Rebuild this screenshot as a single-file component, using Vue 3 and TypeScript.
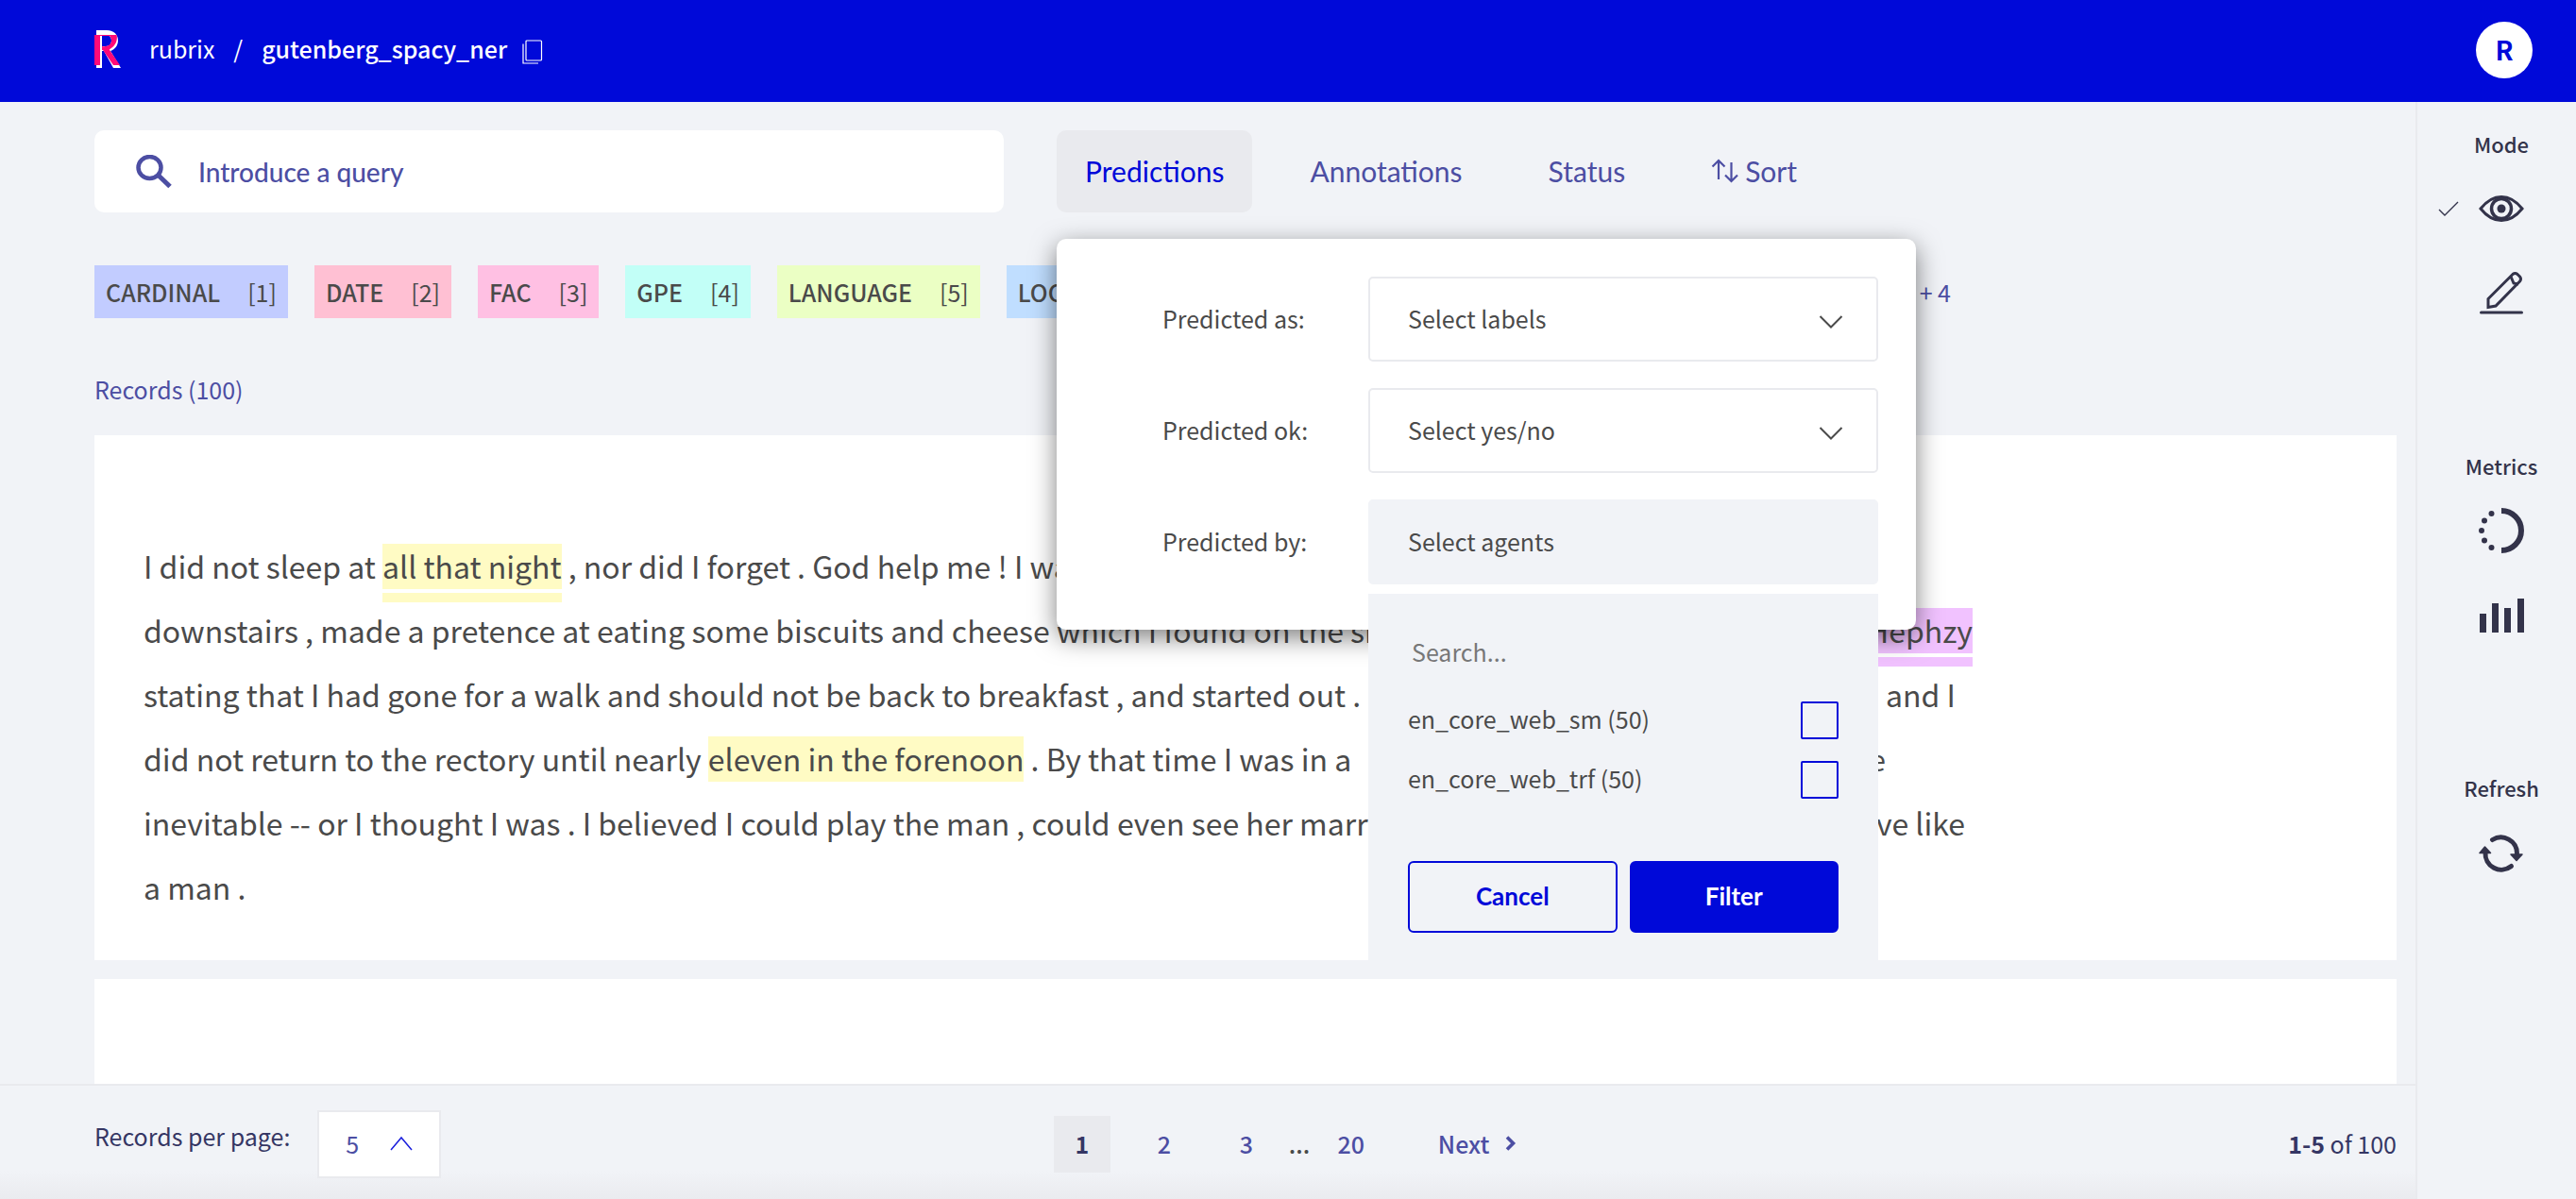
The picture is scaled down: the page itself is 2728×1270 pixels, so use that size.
<script setup lang="ts">
import { ref } from 'vue'

interface EntityLabel { name: string; key: string; color: string }
interface Token { text: string; entity?: string; predicted?: boolean }
interface Line { start: Token[]; end?: Token; inset?: number }

const labels: EntityLabel[] = [
  { name: 'CARDINAL', key: '1', color: '#c2ccff' },
  { name: 'DATE', key: '2', color: '#ffc0d3' },
  { name: 'FAC', key: '3', color: '#ffc0e3' },
  { name: 'GPE', key: '4', color: '#c2fff7' },
  { name: 'LANGUAGE', key: '5', color: '#ebffc4' },
  { name: 'LOC', key: '6', color: '#c0deff' },
]

const lines: Line[] = [
  {
    start: [
      { text: 'I did not sleep at ' },
      { text: 'all that night', entity: 'date', predicted: true },
      { text: ' , nor did I forget . God help me ! I was' },
    ],
  },
  {
    start: [{ text: 'downstairs , made a pretence at eating some biscuits and cheese which I found on the side' }],
    end: { text: 'Hephzy', entity: 'person', predicted: true },
  },
  {
    start: [{ text: 'stating that I had gone for a walk and should not be back to breakfast , and started out .' }],
    end: { text: 'and I' },
    inset: 18,
  },
  {
    start: [
      { text: 'did not return to the rectory until nearly ' },
      { text: 'eleven in the forenoon', entity: 'date' },
      { text: ' . By that time I was in a' },
    ],
    end: { text: 'the' },
    inset: 92,
  },
  {
    start: [{ text: 'inevitable -- or I thought I was . I believed I could play the man , could even see her marry' }],
    end: { text: 'have like' },
    inset: 8,
  },
  { start: [{ text: 'a man .' }] },
]

const agents = ref([
  { id: 'en_core_web_sm', count: 50, checked: false },
  { id: 'en_core_web_trf', count: 50, checked: false },
])
const query = ref('')
const agentQuery = ref('')
const pages = ['1', '2', '3', '...', '20']
</script>

<template>
  <div class="app">
    <header class="topbar">
      <a href="#" class="logo" aria-label="Rubrix home">
        <svg width="30" height="42" viewBox="0 0 30 42">
          <path fill="#fff" fill-rule="evenodd" d="M2 0h11c8 0 12 5 12 11 0 5-3 9-8 11l11 18h-8L10 22H8v18H2zM8 5v12h4c4 0 6-3 6-6s-2-6-6-6z" />
          <path fill="#ff0a78" fill-rule="evenodd" d="M0 5h23.500c.5 1.500.5 3 .2 5-.8 5-4 8-8 10.500L27 37h-7L9 21H6v16H0zM8 6v11c6 1 10-2 10-6 0-2-1-4-2-5z" />
          <path fill="#fff" d="M6 6h2v34H2v-3h4z" />
        </svg>
      </a>
      <nav class="crumbs">
        <a href="#">rubrix</a><span class="slash">/</span><a href="#" class="current">gutenberg_spacy_ner</a>
      </nav>
      <button class="copy" aria-label="Copy name">
        <svg width="22" height="26" viewBox="0 0 22 26" fill="none" stroke="#fff">
          <rect x="4" y="1" width="16.500" height="21" rx="1" stroke-width="1.200" />
          <path d="M1 4.500v20.500h16" stroke-width="1.200" />
        </svg>
      </button>
      <button class="avatar">R</button>
    </header>

    <div class="body">
      <main class="main">
        <div class="content">
          <div class="filters">
            <label class="search">
              <svg width="38" height="36" viewBox="0 0 38 36" fill="none" stroke="#4c4ea3">
                <ellipse cx="14.500" cy="13.500" rx="12" ry="11.500" stroke-width="4.500" />
                <path d="M23.500 21.500L36 33.500" stroke-width="5" />
              </svg>
              <input v-model="query" type="text" placeholder="Introduce a query" aria-label="Query" />
            </label>
            <div class="tabs">
              <div class="tab-wrap">
                <button class="tab active">Predictions</button>
                <section class="panel">
                  <div class="field">
                    <label for="predicted-as">Predicted as:</label>
                    <div class="control">
                      <select id="predicted-as"><option>Select labels</option></select>
                      <svg class="chevron" width="26" height="14" viewBox="0 0 26 14" fill="none" stroke="#4a4a4a" stroke-width="2"><path d="M1.500 1L13 12.500 24.500 1" /></svg>
                    </div>
                  </div>
                  <div class="field">
                    <label for="predicted-ok">Predicted ok:</label>
                    <div class="control">
                      <select id="predicted-ok"><option>Select yes/no</option></select>
                      <svg class="chevron" width="26" height="14" viewBox="0 0 26 14" fill="none" stroke="#4a4a4a" stroke-width="2"><path d="M1.500 1L13 12.500 24.500 1" /></svg>
                    </div>
                  </div>
                  <div class="field">
                    <label for="predicted-by">Predicted by:</label>
                    <div class="control">
                      <button id="predicted-by" class="opened" aria-expanded="true">Select agents</button>
                      <div class="dropdown">
                        <input v-model="agentQuery" class="agent-search" type="text" placeholder="Search..." aria-label="Search agents" />
                        <label v-for="a in agents" :key="a.id" class="agent">
                          <span>{{ a.id }} ({{ a.count }})</span>
                          <input v-model="a.checked" type="checkbox" />
                        </label>
                        <div class="actions">
                          <button class="btn outline">Cancel</button>
                          <button class="btn solid">Filter</button>
                        </div>
                      </div>
                    </div>
                  </div>
                </section>
              </div>
              <button class="tab">Annotations</button>
              <button class="tab">Status</button>
              <button class="tab sort">
                <svg width="30" height="26" viewBox="0 0 30 26" fill="none" stroke="#4c4ea3" stroke-width="2.200">
                  <path d="M8 22V2M1.500 8.500L8 2l6.500 6.500M21.500 4v20M15 17.500l6.500 6.500 6.500-6.500" />
                </svg>
                Sort
              </button>
            </div>
          </div>

          <div class="labels">
            <button v-for="l in labels" :key="l.name" class="label" :style="{ background: l.color }">
              <b>{{ l.name }}</b><span>[{{ l.key }}]</span>
            </button>
            <button class="more">+ 4</button>
          </div>

          <p class="count">Records (100)</p>

          <article class="record">
            <p v-for="(line, i) in lines" :key="i" class="line" :style="{ paddingRight: (line.inset ?? 0) + 'px' }">
              <span><span
                v-for="(t, j) in line.start" :key="j" :class="[t.entity, { predicted: t.predicted }]">{{ t.text }}</span></span>
              <span v-if="line.end"><span :class="[line.end.entity, { predicted: line.end.predicted }]">{{ line.end.text }}</span></span>
            </p>
          </article>
          <article class="record next-record"></article>
        </div>

        <footer class="footer">
          <div class="per-page">
            <span>Records per page:</span>
            <button class="size">
              5
              <svg width="24" height="16" viewBox="0 0 24 16" fill="none" stroke="#1a1edc" stroke-width="1.500"><path d="M1 15L12 2l11 13" /></svg>
            </button>
          </div>
          <nav class="pages">
            <template v-for="p in pages" :key="p">
              <span v-if="p === '...'" class="dots">{{ p }}</span>
              <button v-else class="page" :class="{ on: p === '1' }">{{ p }}</button>
            </template>
            <button class="next">
              Next
              <svg width="12" height="16" viewBox="0 0 12 16" fill="none" stroke="#4c4ea3" stroke-width="3.600"><path d="M2 1.500L8.500 8 2 14.500" /></svg>
            </button>
          </nav>
          <p class="range"><b>1-5</b> of 100</p>
        </footer>
      </main>

      <aside class="sidebar">
        <section>
          <h2>Mode</h2>
          <button class="tool" aria-label="Explore">
            <svg class="tick" width="22" height="16" viewBox="0 0 22 16" fill="none" stroke="#33334a" stroke-width="1.400"><path d="M1 9l6 6L21 1" /></svg>
            <svg width="48" height="48" viewBox="0 0 48 48" fill="none" stroke="#33334a">
              <path d="M2 24Q12 11.500 24 11.500T46 24Q36 36.500 24 36.500T2 24z" stroke-width="3" />
              <circle cx="24" cy="24" r="10.500" stroke-width="3.500" />
              <circle cx="24" cy="24" r="4.500" fill="#33334a" stroke="none" />
            </svg>
          </button>
          <button class="tool" aria-label="Annotate">
            <svg width="48" height="48" viewBox="0 0 48 48" fill="none" stroke="#33334a" stroke-width="3">
              <path d="M10 38.500V29.500L36 3.500q2.500-2 5 0l2.500 2.500q2 2.500 0 5L18 37z" />
              <path d="M34 6l3 7 5 1" />
              <path d="M2.500 44h43" stroke-linecap="round" />
            </svg>
          </button>
        </section>
        <section>
          <h2>Metrics</h2>
          <button class="tool" aria-label="Progress">
            <svg width="48" height="48" viewBox="0 0 48 48" fill="#33334a">
              <path d="M24 3a21 21 0 0 1 0 42" fill="none" stroke="#33334a" stroke-width="6" />
              <circle cx="13.500" cy="6" r="3" /><circle cx="6" cy="13.500" r="3" /><circle cx="3" cy="24" r="3" />
              <circle cx="6" cy="34.500" r="3" /><circle cx="13.500" cy="42" r="3" />
            </svg>
          </button>
          <button class="tool" aria-label="Stats">
            <svg width="48" height="48" viewBox="0 0 48 48" fill="#33334a">
              <path d="M1 22h7v20H1zM14 11h7v31h-7zM27 16h7v26h-7zM41 6h7v36h-7z" />
            </svg>
          </button>
        </section>
        <section>
          <h2>Refresh</h2>
          <button class="tool" aria-label="Refresh">
            <svg width="48" height="48" viewBox="0 0 48 48" fill="none" stroke="#33334a" stroke-width="5" stroke-linecap="round">
              <path d="M14.500 10.500A17 17 0 0 1 40.500 25M34.500 38.500A17 17 0 0 1 7 24" />
              <path d="M34 26h12l-6 6.500zM1 24.500h11.500l-6-6.500z" fill="#33334a" stroke-width="1.500" stroke-linejoin="round" />
            </svg>
          </button>
        </section>
      </aside>
    </div>
  </div>
</template>

<style>
body {
  margin: 0;
  background: #f1f3f7;
}
</style>

<style scoped>
* {
  box-sizing: border-box;
}
.app {
  display: flex;
  flex-direction: column;
  height: 100vh;
  overflow: hidden;
  background: #f1f3f7;
  color: #4a4a4a;
  font: 25px/36px "Noto Sans CJK SC", "Noto Sans", sans-serif;
}
button, input, select {
  margin: 0;
  padding: 0;
  border: 0;
  background: none;
  color: inherit;
  font: inherit;
  outline: 0;
}
p, h2 {
  margin: 0;
}
svg {
  display: block;
  flex: none;
}
a {
  color: inherit;
  text-decoration: none;
}

.topbar {
  display: flex;
  align-items: center;
  flex: none;
  height: 108px;
  padding: 0 46px 2px 100px;
  background: #0009d9;
  color: #fff;
}
.logo {
  margin-right: 28px;
}
.crumbs {
  display: flex;
  padding-bottom: 4px;
}
.slash {
  margin: 0 20px;
}
.current {
  font-weight: 500;
}
.copy {
  margin: 3px 0 0 16px;
}
.avatar {
  width: 60px;
  height: 60px;
  margin-left: auto;
  padding-bottom: 2px;
  border-radius: 50%;
  background: #fff;
  color: #0009d9;
  font-size: 28px;
  font-weight: 700;
}

.body {
  display: flex;
  flex: 1;
  min-height: 0;
}
.main {
  display: flex;
  flex: 1;
  flex-direction: column;
  min-width: 0;
}
.content {
  display: flex;
  flex: 1;
  flex-direction: column;
  min-height: 0;
  padding: 30px 20px 0 100px;
}
.filters {
  display: flex;
  gap: 56px;
  flex: none;
  height: 87px;
  font-family: Lato, sans-serif;
}
.search {
  display: flex;
  align-items: center;
  gap: 28px;
  flex: 0 0 963px;
  padding: 0 44px;
  border-radius: 10px;
  background: #fff;
}
.search input {
  flex: 1;
  color: #4c4ea3;
  font-size: 28px;
  font-weight: 500;
}
.search input::placeholder {
  color: #4c4ea3;
  opacity: 1;
}
.tabs {
  display: flex;
  gap: 31px;
}
.tab-wrap {
  position: relative;
}
.tab {
  height: 100%;
  padding: 0 30px 2px;
  border-radius: 10px;
  color: #4c4ea3;
  font-size: 30px;
}
.tab.active {
  background: #e9eaee;
  color: #0009d9;
}
.sort {
  display: flex;
  align-items: center;
  gap: 6px;
}

.panel {
  position: absolute;
  z-index: 2;
  top: calc(100% + 28px);
  left: 0;
  display: flex;
  flex-direction: column;
  gap: 28px;
  width: 910px;
  padding: 40px 40px 48px 112px;
  border-radius: 10px;
  background: #fff;
  box-shadow: 0 8px 27px rgba(0, 0, 0, 0.5);
  font-family: "Noto Sans CJK SC", "Noto Sans", sans-serif;
}
.field {
  display: flex;
  align-items: center;
}
.field > label {
  flex: 0 0 218px;
  padding-bottom: 2px;
}
.control {
  position: relative;
  flex: 1;
}
.control > select,
.opened {
  display: block;
  width: 100%;
  height: 90px;
  padding: 0 40px 2px;
  border: 2px solid #e9eaee;
  border-radius: 5px;
  appearance: none;
  text-align: left;
}
.opened {
  border-color: #f1f3f7;
  background: #f1f3f7;
}
.chevron {
  position: absolute;
  top: 41px;
  right: 37px;
  pointer-events: none;
}
.dropdown {
  position: absolute;
  top: calc(100% + 10px);
  left: 0;
  right: 0;
  padding: 30px 42px 38px;
  background: #f1f3f7;
}
.agent-search {
  display: block;
  width: 100%;
  height: 62px;
  margin-bottom: 10px;
  padding: 0 4px;
}
.agent-search::placeholder {
  color: #777;
  opacity: 1;
}
.agent {
  display: flex;
  align-items: center;
  justify-content: space-between;
  height: 63px;
}
.agent span {
  padding-bottom: 4px;
}
.agent input {
  width: 40px;
  height: 40px;
  border: 2px solid #0009d9;
  border-radius: 2px;
  appearance: none;
}
.actions {
  display: flex;
  gap: 13px;
  margin-top: 55px;
}
.btn {
  flex: 1;
  height: 76px;
  padding-bottom: 2px;
  border: 2px solid #0009d9;
  border-radius: 6px;
  font-family: Lato, sans-serif;
  font-size: 26px;
  font-weight: 700;
}
.outline {
  color: #0009d9;
}
.solid {
  background: #0009d9;
  color: #fff;
}

.labels {
  display: flex;
  gap: 28px;
  flex: none;
  width: 1966px;
  max-width: 100%;
  height: 56px;
  margin-top: 56px;
}
.label {
  display: flex;
  align-items: center;
  gap: 29px;
  padding: 0 12px;
}
.label b {
  font-weight: 500;
}
.more {
  margin-left: auto;
  color: #4c4ea3;
}
.count {
  flex: none;
  margin: 57px 0 31px;
  color: #4c4ea3;
}
.record {
  flex: none;
  padding: 104px 52px 44px;
  background: #fff;
  font-size: 32px;
  line-height: 68px;
}
.line {
  display: flex;
  justify-content: space-between;
  max-width: 1937px;
  white-space: pre;
}
.next-record {
  flex: 1;
  margin-top: 20px;
  padding: 0;
}
.date,
.person {
  padding-bottom: 2px;
}
.date {
  background: #fffbc4;
}
.date.predicted {
  box-shadow: 0 4px #fff, 0 14px #fffbc4;
}
.person {
  background: #f1c2ff;
  box-shadow: 0 4px #fff, 0 14px #f1c2ff;
}

.footer {
  display: grid;
  grid-template-columns: 5fr 7fr;
  flex: none;
  height: 122px;
  padding: 26px 20px 0 100px;
  border-top: 2px solid #e9eaee;
  background: linear-gradient(#f1f3f7 75%, #eaebef);
  color: #353664;
  position: relative;
}
.per-page {
  display: flex;
  gap: 29px;
}
.per-page span {
  padding-top: 9px;
}
.size {
  display: flex;
  align-items: center;
  justify-content: space-between;
  width: 131px;
  height: 72px;
  padding: 0 28px 2px;
  border: 2px solid #e9eaee;
  background: #fff;
  color: #4c4ea3;
}
.pages {
  display: flex;
  align-items: center;
  height: 72px;
  color: #4c4ea3;
  font-weight: 500;
}
.page {
  width: 60px;
  height: 60px;
  margin-right: 27px;
  padding-bottom: 2px;
}
.page.on {
  background: #e9eaee;
  color: #353664;
  font-weight: 700;
}
.dots {
  width: 24px;
  padding-bottom: 2px;
  color: #4a4a4a;
}
.dots,
.dots + .page {
  margin-left: -12px;
}
.dots + .page {
  margin: 0 62px 0 12px;
}
.next {
  display: flex;
  align-items: center;
  gap: 17px;
  padding-bottom: 2px;
}
.range {
  position: absolute;
  top: 43px;
  right: 20px;
}

.sidebar {
  flex: 0 0 170px;
  padding: 26px 0 0 10px;
  border-left: 2px solid #e9eaee;
  color: #33334a;
}
.sidebar section {
  display: flex;
  flex-direction: column;
  align-items: center;
  height: 341px;
}
.sidebar h2 {
  font-size: 22px;
  font-weight: 500;
  line-height: 36px;
}
.tool {
  position: relative;
  margin-top: 27px;
}
.tool + .tool {
  margin-top: 42px;
}
.tick {
  position: absolute;
  top: 16px;
  left: -43px;
}
</style>
